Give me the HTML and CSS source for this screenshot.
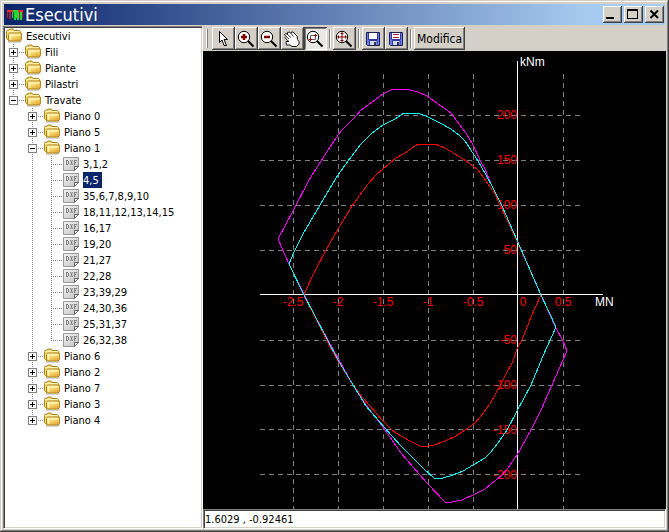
FILE: index.html
```html
<!DOCTYPE html>
<html lang="it">
<head>
<meta charset="utf-8">
<title>Esecutivi</title>
<link rel="stylesheet" href="styles.css">
</head>
<body>
<svg class="defs" aria-hidden="true">
  <defs>
    <linearGradient id="gold" x1="0" y1="0" x2="0.6" y2="1">
      <stop offset="0" stop-color="#fffbd0"/>
      <stop offset="0.5" stop-color="#fbdf7c"/>
      <stop offset="1" stop-color="#e3a92f"/>
    </linearGradient>
    <linearGradient id="sheet" x1="0" y1="0" x2="1" y2="1">
      <stop offset="0" stop-color="#f4f4f4"/>
      <stop offset="1" stop-color="#c0c0c0"/>
    </linearGradient>
    <symbol id="folder" viewBox="0 0 16 16">
      <path d="M2 14h12.500l1.500-1.500" fill="none" stroke="#a9a9a9"/>
      <path d="M.5 3.500l1-1.500h1.500l1-1h3l1 1.500h5.500l1 1V11l-1 1.500H2.500L.5 10z" fill="#f6d878" stroke="#a88222"/>
      <path d="M1.500 3.500h12" stroke="#fff3b0"/>
      <path d="M2.500 13V6.500l1-1.500h12v6.500l-1.500 1.500z" fill="url(#gold)" stroke="#b58a22"/>
      <path d="M4.500 12V7h9.500" fill="none" stroke="#fff6bf"/>
    </symbol>
    <symbol id="dxf" viewBox="0 0 16 16">
      <path d="M.5 1.500h15v9l-4 4H.5z" fill="url(#sheet)" stroke="#989898"/>
      <path d="M11.500 14.500v-4h4z" fill="#fff" stroke="#606060"/>
      <g fill="none" stroke="#808080" shape-rendering="crispEdges">
        <path d="M3.500 4v5M3 4.500h2M3 8.500h2M5.500 5v3M11.500 4v5M11 4.500h3M11 6.500h2"/>
      </g>
      <path d="M7.500 4l2 5M9.500 4l-2 5" stroke="#808080" fill="none"/>
    </symbol>
    <symbol id="lens" viewBox="0 0 18 18">
      <path d="M11 11l5.500 5.500" stroke="#000" stroke-width="2"/>
      <circle cx="7" cy="7" r="5.700" fill="#fff" stroke="#000"/>
    </symbol>
    <symbol id="disk" viewBox="0 0 16 16">
      <path d="M1.500 1.500h13v13H2.500l-1-1z" fill="#6878f0" stroke="#202050"/>
      <path d="M4 2h8v6H4z" fill="#fff"/>
      <path d="M5 10h7v4H5z" fill="#d8d8e0"/>
      <path d="M9 11h2v3H9z" fill="#303068"/>
      <path d="M3.500 2v6.500h9V2M4.500 14v-4.500h7.500V14" fill="none" stroke="#3038a0"/>
    </symbol>
  </defs>
</svg>
<div class="window">
  <header class="titlebar">
    <svg class="app-icon" viewBox="0 0 16 12" shape-rendering="crispEdges" aria-hidden="true">
      <path d="M0 1h6v2H0zM11 1h5v2h-5z" fill="#f02828"/>
      <path d="M6 1h5v2H6zM5 3h1v6H5zM7 3h2v8H7zM9 3h1v6H9zM10 3h2v8h-2zM13 3h2v8h-2z" fill="#20d838"/>
      <path d="M0 3h1v6H0zM2 3h2v7H2zM12 3h1v6h-1zM15 3h1v6h-1z" fill="#a82020"/>
    </svg>
    <h1>Esecutivi</h1>
    <div class="controls">
      <button type="button" aria-label="Riduci a icona"><svg viewBox="0 0 15 13" shape-rendering="crispEdges"><path d="M1 9h8v2H1z"/></svg></button>
      <button type="button" aria-label="Ingrandisci"><svg viewBox="0 0 15 13" shape-rendering="crispEdges"><path d="M1 1h11v10H1zM2 3v7h9V3z" fill-rule="evenodd"/></svg></button>
      <button type="button" aria-label="Chiudi"><svg viewBox="0 0 15 13"><path d="M3.500 2.500l7.500 7.500M11 2.500l-7.500 7.500" stroke="#000" stroke-width="2"/></svg></button>
    </div>
  </header>
  <div class="workspace">
    <nav class="tree" aria-label="Esecutivi">
      <div class="row root"><svg class="icon"><use href="#folder"/></svg><a href="#">Esecutivi</a></div>
      <ul>
        <li><div class="row"><button type="button" class="toggle closed" aria-label="Espandi Fili"></button><svg class="icon"><use href="#folder"/></svg><a href="#">Fili</a></div></li>
        <li><div class="row"><button type="button" class="toggle closed" aria-label="Espandi Piante"></button><svg class="icon"><use href="#folder"/></svg><a href="#">Piante</a></div></li>
        <li><div class="row"><button type="button" class="toggle closed" aria-label="Espandi Pilastri"></button><svg class="icon"><use href="#folder"/></svg><a href="#">Pilastri</a></div></li>
        <li><div class="row"><button type="button" class="toggle" aria-label="Comprimi Travate"></button><svg class="icon"><use href="#folder"/></svg><a href="#">Travate</a></div>
          <ul>
            <li><div class="row"><button type="button" class="toggle closed" aria-label="Espandi Piano 0"></button><svg class="icon"><use href="#folder"/></svg><a href="#">Piano 0</a></div></li>
            <li><div class="row"><button type="button" class="toggle closed" aria-label="Espandi Piano 5"></button><svg class="icon"><use href="#folder"/></svg><a href="#">Piano 5</a></div></li>
            <li><div class="row"><button type="button" class="toggle" aria-label="Comprimi Piano 1"></button><svg class="icon"><use href="#folder"/></svg><a href="#">Piano 1</a></div>
              <ul>
                <li><div class="row leaf"><svg class="icon"><use href="#dxf"/></svg><a href="#">3,1,2</a></div></li>
                <li><div class="row leaf"><svg class="icon"><use href="#dxf"/></svg><a href="#" class="selected" aria-current="true">4,5</a></div></li>
                <li><div class="row leaf"><svg class="icon"><use href="#dxf"/></svg><a href="#">35,6,7,8,9,10</a></div></li>
                <li><div class="row leaf"><svg class="icon"><use href="#dxf"/></svg><a href="#">18,11,12,13,14,15</a></div></li>
                <li><div class="row leaf"><svg class="icon"><use href="#dxf"/></svg><a href="#">16,17</a></div></li>
                <li><div class="row leaf"><svg class="icon"><use href="#dxf"/></svg><a href="#">19,20</a></div></li>
                <li><div class="row leaf"><svg class="icon"><use href="#dxf"/></svg><a href="#">21,27</a></div></li>
                <li><div class="row leaf"><svg class="icon"><use href="#dxf"/></svg><a href="#">22,28</a></div></li>
                <li><div class="row leaf"><svg class="icon"><use href="#dxf"/></svg><a href="#">23,39,29</a></div></li>
                <li><div class="row leaf"><svg class="icon"><use href="#dxf"/></svg><a href="#">24,30,36</a></div></li>
                <li><div class="row leaf"><svg class="icon"><use href="#dxf"/></svg><a href="#">25,31,37</a></div></li>
                <li><div class="row leaf"><svg class="icon"><use href="#dxf"/></svg><a href="#">26,32,38</a></div></li>
              </ul>
            </li>
            <li><div class="row"><button type="button" class="toggle closed" aria-label="Espandi Piano 6"></button><svg class="icon"><use href="#folder"/></svg><a href="#">Piano 6</a></div></li>
            <li><div class="row"><button type="button" class="toggle closed" aria-label="Espandi Piano 2"></button><svg class="icon"><use href="#folder"/></svg><a href="#">Piano 2</a></div></li>
            <li><div class="row"><button type="button" class="toggle closed" aria-label="Espandi Piano 7"></button><svg class="icon"><use href="#folder"/></svg><a href="#">Piano 7</a></div></li>
            <li><div class="row"><button type="button" class="toggle closed" aria-label="Espandi Piano 3"></button><svg class="icon"><use href="#folder"/></svg><a href="#">Piano 3</a></div></li>
            <li><div class="row"><button type="button" class="toggle closed" aria-label="Espandi Piano 4"></button><svg class="icon"><use href="#folder"/></svg><a href="#">Piano 4</a></div></li>
          </ul>
        </li>
      </ul>
    </nav>
    <main class="viewer">
      <div class="toolbar" role="toolbar" aria-label="Strumenti">
        <span class="grip"></span>
        <div class="group">
          <button type="button" class="tool" aria-label="Selezione"><svg viewBox="0 0 18 18"><path d="M5.500 1.500v11l2.500-2.500 2 5.500h2.500l-2.500-6h3.500z" fill="#fff" stroke="#000"/></svg></button>
          <button type="button" class="tool" aria-label="Zoom avanti"><svg viewBox="0 0 18 18"><use href="#lens"/><path d="M4 7h6M7 4v6" stroke="#800000" stroke-width="2.500"/></svg></button>
          <button type="button" class="tool" aria-label="Zoom indietro"><svg viewBox="0 0 18 18"><use href="#lens"/><path d="M4 7h6" stroke="#800000" stroke-width="2.500"/></svg></button>
          <button type="button" class="tool" aria-label="Sposta"><svg viewBox="0 0 18 18"><path d="M3.500 9.500L2 7.500l1-1L1.500 4.500l1.500-1 1.500 1L4.500 2.500l2-.5 1.500 1.500.5-1.500h1.500l4 4 .500 3.500 1.500 2v2.500l-2.500 2.500H9l-2-1.500H3.500L3 11.500h3z" fill="#fff" stroke="#000" stroke-width=".9"/><path d="M3 6.500L6 9M4.500 4.500L8 7.500M8 3.500l2.500 3" fill="none" stroke="#000" stroke-width=".8"/></svg></button>
          <button type="button" class="tool pressed" aria-label="Zoom finestra" aria-pressed="true"><svg viewBox="0 0 18 18"><use href="#lens"/><path d="M4.500 5.500h5v4h-5z" fill="none" stroke="#606060"/><path d="M3 9.500h3M4.500 8v3M8 5.500h3M9.500 4v3" stroke="#a00000"/></svg></button>
        </div>
        <span class="separator"></span>
        <button type="button" class="tool" aria-label="Zoom estensione"><svg viewBox="0 0 18 18"><use href="#lens"/><path d="M2 7h10M7 2v10M3.500 5.500v3M10.500 5.500v3M5.500 3.500h3M5.500 10.500h3" stroke="#800000"/></svg></button>
        <span class="separator"></span>
        <div class="group">
          <button type="button" class="tool" aria-label="Salva"><svg viewBox="0 0 18 18"><use href="#disk" x="1" y="1" width="16" height="16"/></svg></button>
          <button type="button" class="tool" aria-label="Salva con nome"><svg viewBox="0 0 18 18"><use href="#disk" x="1" y="1" width="16" height="16"/><path d="M6 4.500h6M6 7.500h6" stroke="#b02030"/></svg></button>
        </div>
        <span class="separator"></span>
        <button type="button" class="tool text">Modifica</button>
      </div>
      <svg class="chart" viewBox="203 51 463 458" role="img" aria-label="Dominio di resistenza: MN, kNm">
        <g class="grid">
          <path d="M260 115.500h320M260 160.500h320M260 205.500h320M260 250.500h320M260 340.500h320M260 385.500h320M260 429.500h320M260 474.500h320"/>
          <path d="M293.500 74v435M338.500 74v435M383.500 74v435M428.500 74v435M473.500 74v435M563.500 74v435"/>
        </g>
        <g class="tick end">
          <text x="517" y="119">200</text><text x="517" y="164">150</text><text x="517" y="209">100</text><text x="517" y="254">50</text>
          <text x="517" y="344">-50</text><text x="517" y="389">-100</text><text x="517" y="434">-150</text><text x="517" y="479">-200</text>
        </g>
        <g class="tick middle">
          <text x="293" y="306">-2.5</text><text x="338" y="306">-2</text><text x="383" y="306">-1.5</text><text x="428" y="306">-1</text>
          <text x="473" y="306">-0.5</text><text x="523" y="306">0</text><text x="563" y="306">0.5</text>
        </g>
        <path class="axis" d="M260 294.500h343M517.500 61v448"/>
        <text class="unit" x="520" y="66">kNm</text>
        <text class="unit" x="595" y="306">MN</text>
        <polygon class="curve red" points="304,294 316,269 326,250 338,229 352,206 368,184 376,175 383,169 396,158 405,153 418,144 435,144 445,148 455,154 466,161 473,166 478,170 486,181 495,194 499,203 517,241 541,295 531,317 522,340 517,349 513,361 506,374 500,386 490,404 481,416 475,423 465,430 456,436 445,441 434,445 428,446 420,446 410,441 396,433 392,430 383,421 370,406 363,398 353,385 335,356 326,339 315,317 304,296"/>
        <polygon class="curve magenta" points="278,239 293,211 309,180 321,161 332,144 341,131 356,116 361,110 383,94 393,89 406,89 418,92 427,96 441,106 451,113 466,133 473,145 480,160 485,169 491,184 502,206 517,240 522,252 541,295 555,326 563,341 567,351 552,385 541,410 531,430 517,455 508,468 502,475 485,489 473,495 462,500 452,502 445,502 427,483 419,474 401,453 383,427 366,405 353,385 338,358 328,340 315,316 304,294 289,264"/>
        <polygon class="curve cyan" points="289,264 294,252 303,234 320,205 338,175 348,161 361,144 372,133 383,125 395,119 404,113 417,113 426,116 440,123 451,129 460,136 465,141 469,147 478,161 486,175 493,188 502,206 517,240 541,295 556,327 543,356 531,385 517,411 507,430 498,443 490,453 485,458 473,465 463,471 453,475 443,478 434,478 423,468 401,446 384,427 366,406 353,385 338,360 327,339 303,293"/>
      </svg>
      <input class="status" type="text" readonly aria-label="Coordinate" value="1.6029 , -0.92461">
    </main>
  </div>
</div>
</body>
</html>
```
FILE: styles.css
```css
* { box-sizing: border-box; }

body {
  margin: 0;
  background: #d4d0c8;
  color: #000;
  font: 11px/16px "DejaVu Sans Condensed", "Noto Sans", sans-serif;
}

button, input { font: inherit; color: inherit; }
.defs { display: block; width: 0; height: 0; }

.window {
  display: flex;
  flex-direction: column;
  height: 100vh;
  padding: 4px 3px 3px;
  background: #d4d0c8;
  box-shadow: inset -1px -1px #404040, inset 1px 1px #d4d0c8, inset -2px -2px #808080, inset 2px 2px #fff;
}

.titlebar {
  display: flex;
  align-items: center;
  flex: none;
  height: 21px;
  margin: 0 1px 1px;
  padding: 0 1px 0 3px;
  background: linear-gradient(to right, #0a246a, #a6caf0 88%);
}
.app-icon { width: 16px; height: 12px; }
h1 {
  flex: 1;
  margin: 0 0 0 2px;
  color: #fff;
  font-size: 18px;
  font-weight: normal;
  line-height: 20px;
}
.controls { display: flex; gap: 2px; }
.controls button { width: 19px; height: 17px; }
.controls svg { display: block; width: 15px; height: 13px; }

.controls button, .tool {
  padding: 0;
  border: 0;
  border-radius: 0;
  background: #d4d0c8;
  box-shadow: inset -1px -1px #404040, inset 1px 1px #fff, inset -2px -2px #808080;
}
.controls button { padding: 2px; }

.workspace { display: flex; flex: 1; min-height: 0; }

.tree {
  flex: none;
  width: 200px;
  padding: 1px 1px 1px 2px;
  overflow: hidden;
  border: 1px solid;
  border-color: #808080 #fff #fff #808080;
  background: #fff;
  box-shadow: inset 1px 1px #404040, inset -1px -1px #d4d0c8;
}
.tree ul { margin: 0; padding: 0; list-style: none; }
.tree li {
  background: repeating-linear-gradient(to bottom, #808080 0 1px, transparent 1px 2px) 7px 0 / 1px 100% no-repeat;
}
.tree li:last-child { background-size: 1px 8px; }
.tree li > ul { margin-left: 19px; }
.row {
  display: flex;
  align-items: center;
  height: 16px;
  padding-left: 3px;
  background: repeating-linear-gradient(to right, #808080 0 1px, transparent 1px 2px) 7px 8px / 11px 1px no-repeat;
}
.row.root { padding-left: 0; background: none; }
.row.leaf { padding-left: 19px; }
.toggle {
  width: 9px;
  height: 9px;
  margin: 1px 7px 0 0;
  padding: 0;
  border: 1px solid #808080;
  border-radius: 0;
  background: linear-gradient(#000, #000) center / 5px 1px no-repeat #fff;
}
.toggle.closed {
  background:
    linear-gradient(#000, #000) center / 5px 1px no-repeat,
    linear-gradient(#000, #000) center / 1px 5px no-repeat #fff;
}
.icon { flex: none; width: 16px; height: 16px; }
.tree a {
  height: 16px;
  margin-left: 4px;
  padding-right: 3px;
  color: #000;
  line-height: 18px;
  text-decoration: none;
  white-space: nowrap;
}
.tree a.selected { background: #0a246a; color: #fff; }

.viewer { display: flex; flex: 1; flex-direction: column; min-width: 0; }

.toolbar {
  display: flex;
  align-items: center;
  flex: none;
  height: 25px;
  padding: 0 2px 0 3px;
}
.grip, .separator {
  width: 2px;
  height: 19px;
  border-left: 1px solid #fff;
  border-right: 1px solid #808080;
}
.grip { margin-right: 4px; }
.separator { margin: 0 2px; border-left-color: #808080; border-right-color: #fff; }
.group { display: flex; }
.tool { width: 23px; height: 23px; }
.tool svg { display: block; width: 18px; height: 18px; margin: 0 2px; }
.tool.pressed {
  background: #eae8e4;
  box-shadow: inset 1px 1px #404040, inset -1px -1px #fff, inset 2px 2px #808080;
}
.tool.text { width: auto; padding: 0 3px; font-size: 12px; }

.chart { display: block; flex: 1; width: 100%; min-height: 0; background: #000; }
.grid { fill: none; stroke: #808080; stroke-dasharray: 5 4; shape-rendering: crispEdges; }
.tick, .unit { font: 12px "Liberation Sans", sans-serif; }
.tick { fill: #f00; }
.unit { fill: #fff; }
.end { text-anchor: end; }
.middle { text-anchor: middle; }
.axis { stroke: #fff; shape-rendering: crispEdges; }
.curve { fill: none; shape-rendering: crispEdges; }
.red { stroke: #f00; }
.magenta { stroke: #f0f; }
.cyan { stroke: #0ff; }

.status {
  flex: none;
  width: 100%;
  height: 20px;
  padding: 0 1px;
  border: 1px solid;
  border-color: #808080 #fff #fff #808080;
  border-radius: 0;
  background: #fff;
  box-shadow: inset 1px 1px #404040, inset -1px -1px #d4d0c8;
}
```
